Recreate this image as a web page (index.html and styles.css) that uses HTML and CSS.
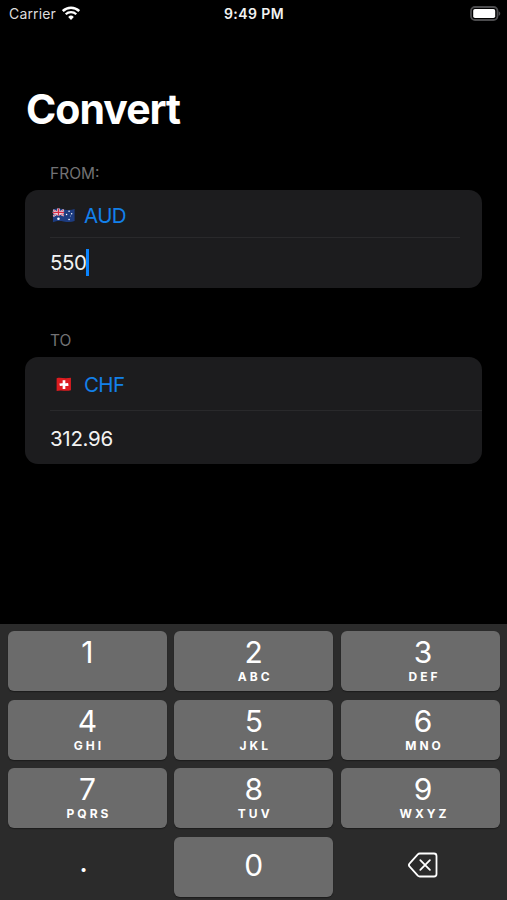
FILE: index.html
```html
<!DOCTYPE html>
<html lang="en">
<head>
    <meta charset="UTF-8">
    <meta name="viewport" content="width=device-width, initial-scale=1.0">
    <title>Convert</title>
    <link rel="stylesheet" href="styles.css">
</head>
<body>
    <div class="screen">
        <header class="status-bar">
            <div class="carrier">
                <span>Carrier</span>
                <svg class="wifi" viewBox="0 0 18 14" width="18" height="14">
                    <path d="M.8 5a11.8 11.8 0 0 1 16.4 0" fill="none" stroke="#fff" stroke-width="2.5"/>
                    <path d="M3.7 8.2a7.6 7.6 0 0 1 10.6 0" fill="none" stroke="#fff" stroke-width="2.2"/>
                    <path d="M6.2 10.9a4 4 0 0 1 5.6 0L9 13.9z" fill="#fff"/>
                </svg>
            </div>
            <div class="time">9:49 PM</div>
            <svg class="battery" viewBox="0 0 31 15" width="31" height="15">
                <rect x="1" y="1" width="26.5" height="13" rx="4" fill="#000" stroke="#4c4c4e" stroke-width="1.8"/>
                <rect x="3.2" y="3" width="22" height="9" rx="1.8" fill="#fff"/>
                <path d="M28.6 5.2c2.2.8 2.2 3.800 0 4.600z" fill="#4c4c4e"/>
            </svg>
        </header>

        <main class="content">
            <h1>Convert</h1>

            <h2 class="section-title">FROM:</h2>
            <section class="card card-from">
                <div class="row currency">
                    <svg class="flag" viewBox="0 0 26 18" width="24" height="17">
                        <path d="M1 2.6C5 .8 8 1.4 13 2.4s8 .6 11.5-.4v13c-4 1.6-7.5 1.2-12 .5s-7.5-.7-11.5.9z" fill="#1d3c80"/>
                        <path d="M1.3 3l11.5 6.3M1.3 9.7L12.8 2.7" stroke="#e8dfe8" stroke-width="1.9"/>
                        <path d="M1.3 3l11.5 6.3M1.3 9.7L12.8 2.7" stroke="#d4405a" stroke-width=".8"/>
                        <path d="M1 6.3c4-1.5 8-1 12-.3M7 1.4v7.7" fill="none" stroke="#f5e9ee" stroke-width="2.8"/>
                        <path d="M1 6.3c4-1.5 8-1 12-.3M7 1.4v7.7" fill="none" stroke="#d52b45" stroke-width="1.5"/>
                        <g fill="#fff">
                            <circle cx="7" cy="12.5" r="1.4"/>
                            <circle cx="18.5" cy="4.5" r=".8"/>
                            <circle cx="15.8" cy="8" r=".8"/>
                            <circle cx="21.3" cy="7.2" r=".8"/>
                            <circle cx="19.8" cy="9.5" r=".5"/>
                            <circle cx="18.5" cy="13.3" r=".9"/>
                        </g>
                    </svg>
                    <span class="code">AUD</span>
                </div>
                <div class="row amount"><span>550</span><i class="caret"></i></div>
            </section>

            <h2 class="section-title">TO</h2>
            <section class="card card-to">
                <div class="row currency">
                    <svg class="flag" viewBox="0 0 26 18" width="24" height="17">
                        <path d="M5 2.3c4-1.4 8 .7 15.5-.7v13.6c-6 1.5-10.5-.9-15.5.9z" fill="#dc1c20"/>
                        <path d="M13 4.3v9.5M8.3 9.2c3.3-.7 6 .3 9.4-.3" fill="none" stroke="#fff" stroke-width="2.9"/>
                    </svg>
                    <span class="code">CHF</span>
                </div>
                <div class="row amount"><span>312.96</span></div>
            </section>
        </main>

        <div class="keypad">
            <button class="key"><span class="digit">1</span></button>
            <button class="key"><span class="digit">2</span><span class="letters">ABC</span></button>
            <button class="key key-right"><span class="digit">3</span><span class="letters">DEF</span></button>
            <button class="key"><span class="digit">4</span><span class="letters">GHI</span></button>
            <button class="key"><span class="digit">5</span><span class="letters">JKL</span></button>
            <button class="key key-right"><span class="digit">6</span><span class="letters">MNO</span></button>
            <button class="key"><span class="digit">7</span><span class="letters">PQRS</span></button>
            <button class="key"><span class="digit">8</span><span class="letters">TUV</span></button>
            <button class="key key-right"><span class="digit">9</span><span class="letters">WXYZ</span></button>
            <button class="key key-plain key-dot"><span class="digit">.</span></button>
            <button class="key key-zero"><span class="digit">0</span></button>
            <button class="key key-plain key-delete" aria-label="Delete">
                <svg viewBox="0 0 30 26" width="30" height="26" fill="none" stroke="#fff" stroke-width="1.8" stroke-linecap="round" stroke-linejoin="round">
                    <path d="M11.8 1.5H26q2.5 0 2.5 2.5v18q0 2.5-2.5 2.5H11.8q-1.2 0-2-.8L1.7 14.7q-1.6-1.7 0-3.4L9.8 2.300q.8-.8 2-.8z"/>
                    <path d="M12.3 8.2l9.6 9.6M21.9 8.2l-9.6 9.6"/>
                </svg>
            </button>
        </div>
    </div>
</body>
</html>
```

FILE: styles.css
```css
* {
    box-sizing: border-box;
}
body {
    margin: 0;
    background: #000;
    color: #fff;
    font-family: Inter, "Liberation Sans", sans-serif;
}
.screen {
    display: flex;
    flex-direction: column;
    height: 900px;
    overflow: hidden;
}
.status-bar {
    display: grid;
    grid-template-columns: 1fr auto 1fr;
    align-items: center;
    height: 27px;
    padding: 0 6px 0 9px;
    font-size: 14px;
}
.carrier {
    display: flex;
    align-items: center;
    gap: 6px;
    color: #ddd;
    letter-spacing: 0.15px;
}
.wifi {
    margin-top: -2px;
}
.time {
    font-weight: 600;
    font-size: 14px;
    letter-spacing: 0.4px;
    margin-right: 2px;
    color: #f2f2f2;
}
.battery {
    justify-self: end;
}
.content {
    flex: 1;
    padding: 0 25px;
}
h1 {
    margin: 57px 0 0 1px;
    font-size: 41px;
    line-height: 50px;
    font-weight: 700;
    letter-spacing: -1px;
}
.section-title {
    margin: 0;
    padding-left: 25px;
    font-size: 15.5px;
    line-height: 20px;
    font-weight: 400;
    color: #727274;
}
h1 + .section-title {
    margin-top: 30px;
}
.card {
    margin-top: 6px;
    border-radius: 13px;
    background: #1c1c1e;
}
.card + .section-title {
    margin-top: 43px;
}
.row {
    display: flex;
    align-items: center;
    margin-left: 25px;
    font-size: 20.5px;
    letter-spacing: -0.4px;
}
.currency {
    border-bottom: 1px solid #29292b;
}
.card-from {
    height: 98px;
}
.card-from .currency {
    height: 48px;
    padding-top: 4px;
    margin-right: 22px;
}
.card-from .amount {
    height: 48px;
}
.card-to {
    height: 107px;
}
.card-to .row {
    height: 54px;
}
.card-to .currency {
    padding-top: 1px;
}
.flag {
    margin: 0 8.5px 0 1.5px;
}
.code {
    color: #1380ea;
    letter-spacing: -0.6px;
}
.amount {
    color: #f2f2f2;
}
.caret {
    width: 2.5px;
    height: 27px;
    margin-left: -0.5px;
    background: #0a84ff;
}
.card-to .amount {
    letter-spacing: -0.3px;
}
.keypad {
    display: grid;
    grid-template-columns: repeat(3, 1fr);
    grid-auto-rows: 60px;
    gap: 8.5px 7.4px;
    height: 276px;
    padding: 7px 7.5px 0 8px;
    background: #2b2b2b;
}
.key {
    display: flex;
    flex-direction: column;
    align-items: center;
    padding: 3px 0 0;
    border: none;
    border-radius: 6px;
    background: #6b6b6b;
    box-shadow: 0 1px 1px #1c1c1c;
    color: #fff;
    font-family: inherit;
}
.digit {
    font-size: 30px;
    line-height: 37px;
    font-weight: 400;
}
.letters {
    padding-left: 3px;
    font-size: 12px;
    line-height: 12px;
    font-weight: 700;
    letter-spacing: 3px;
}
.key-right {
    padding-left: 6px;
}
.key-zero {
    padding-top: 10px;
}
.key-plain {
    justify-content: center;
    padding: 0;
    background: none;
    box-shadow: none;
}
.key-dot {
    padding: 0 8px 11px 0;
}
.key-delete {
    padding: 0 0 3px 6px;
}
```
